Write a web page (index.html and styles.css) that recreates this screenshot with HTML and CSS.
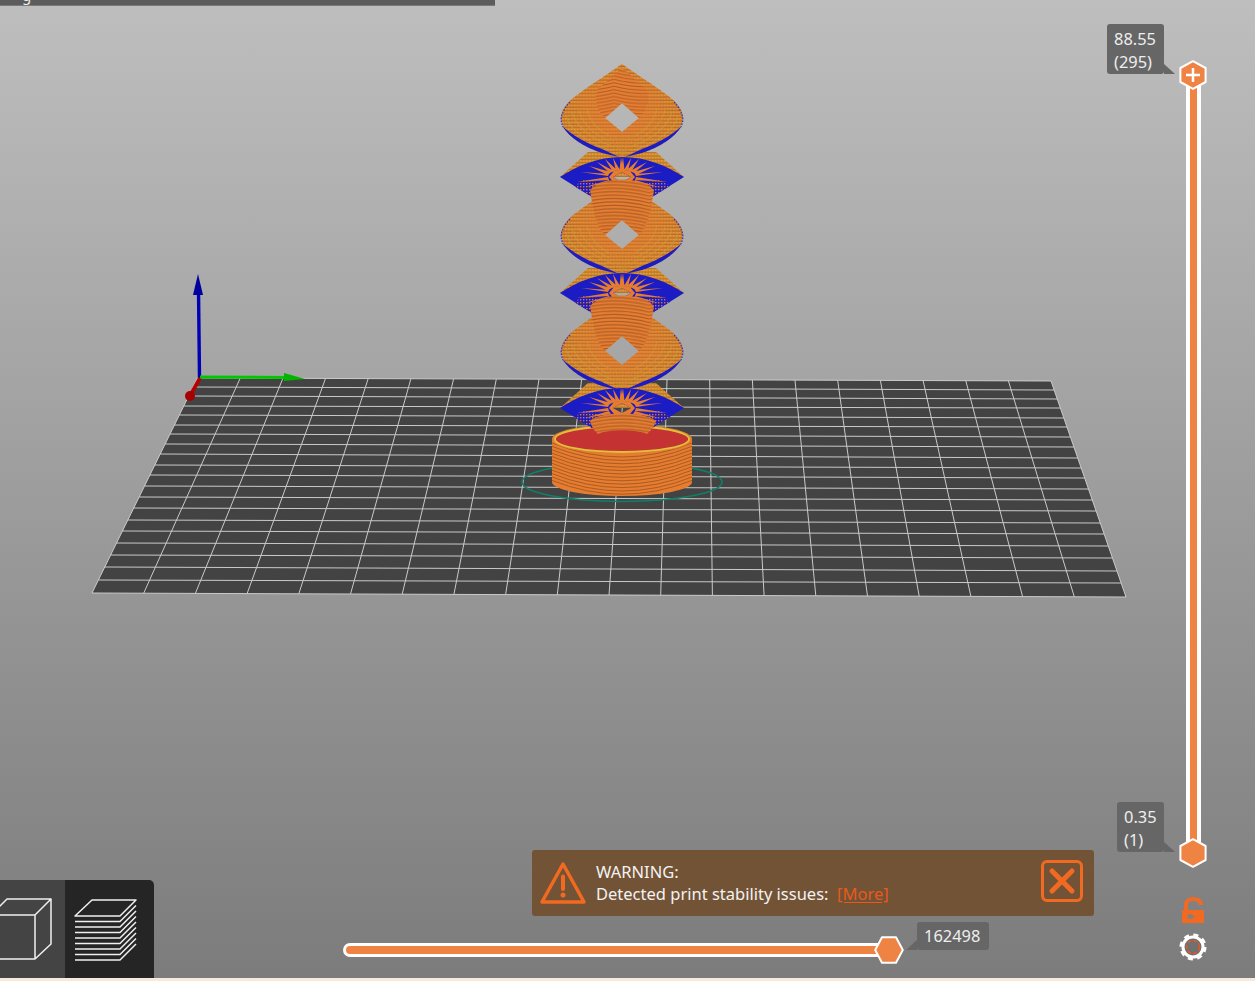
FILE: index.html
```html
<!DOCTYPE html>
<html lang="en">
<head>
<meta charset="utf-8">
<title>Layer preview</title>
<link rel="stylesheet" href="styles.css">
</head>
<body>
<main class="viewport">
  <svg class="scene" viewBox="0 0 1255 978" width="1255" height="978" aria-hidden="true">
    <defs>
      <radialGradient id="grad-lobe" cx="50%" cy="50%" r="50%">
        <stop offset="0" stop-color="#e67f33" stop-opacity=".95"/>
        <stop offset=".5" stop-color="#e67f33" stop-opacity=".7"/>
        <stop offset="1" stop-color="#e67f33" stop-opacity=".1"/>
      </radialGradient>
      <pattern id="pat-stripe" patternUnits="userSpaceOnUse" width="4" height="3.4">
        <rect y="2.3" width="4" height="1" fill="#a85f26" opacity=".55"/>
      </pattern>
      <pattern id="pat-yellow" patternUnits="userSpaceOnUse" width="3" height="3.4">
        <rect width="3" height="3.4" fill="#de8030"/>
        <rect y="0.4" width="1.6" height="1" fill="#d4bb3c"/>
        <rect y="2.4" width="3" height="1" fill="#a9792a"/>
      </pattern>
      <pattern id="pat-smile" patternUnits="userSpaceOnUse" width="60" height="27.2" x="592" y="70">
        <rect width="60" height="27.2" fill="#e67e33"/>
        <path class="col-lines" d="M0 -10Q30 -2 60 -10M0 -6.6Q30 1.4 60 -6.6M0 -3.2Q30 4.8 60 -3.2M0 .2Q30 8.2 60 .2M0 3.6Q30 11.6 60 3.6M0 7Q30 15 60 7M0 10.4Q30 18.4 60 10.4M0 13.8Q30 21.8 60 13.8M0 17.2Q30 25.2 60 17.2M0 20.6Q30 28.6 60 20.6M0 24Q30 32 60 24"/>
      </pattern>
      <pattern id="pat-frown" patternUnits="userSpaceOnUse" width="70" height="27.2" x="587" y="70">
        <rect width="70" height="27.2" fill="#e67e33"/>
        <path class="col-lines" d="M0 0Q35 -9 70 0M0 3.4Q35 -5.6 70 3.4M0 6.8Q35 -2.2 70 6.8M0 10.2Q35 1.2 70 10.2M0 13.6Q35 4.6 70 13.6M0 17Q35 8 70 17M0 20.4Q35 11.4 70 20.4M0 23.8Q35 14.8 70 23.8M0 27.2Q35 18.2 70 27.2M0 30.6Q35 21.6 70 30.6M0 34Q35 25 70 34"/>
      </pattern>
      <pattern id="pat-dots" patternUnits="userSpaceOnUse" width="3" height="3">
        <rect width="3" height="3" fill="#1c1cc4"/>
        <rect width="1.4" height="1.4" fill="#d9752f"/>
      </pattern>

      <path id="lobe-shape" fill-rule="evenodd" d="M0 -54C-14 -44 -30 -34 -42 -25C-54 -17 -61 -9 -61 0C-61 12 -45 27 -20 35L0 39L20 35C45 27 61 12 61 0C61 -9 54 -17 42 -25C30 -34 14 -44 0 -54ZM0 -15L-17 0L0 14L17 0Z"/>

      <g id="lobe">
        <use href="#lobe-shape" class="lobe-out"/>
        <use href="#lobe-shape" class="lobe-in"/>
        <use href="#lobe-shape" class="lobe-stripes"/>
        <path class="lobe-arcs" d="M-56 -2C-52 14 -30 27 -8 33M56 -2C52 14 30 27 8 33M-50 -6C-46 10 -28 22 -10 28M50 -6C46 10 28 22 10 28M-43 -8C-40 6 -26 18 -12 23M43 -8C40 6 26 18 12 23M-35 -10C-33 2 -24 12 -14 17M35 -10C33 2 24 12 14 17"/>
        <path class="lobe-fan" d="M0 37L-14 16M0 37L-7 18M0 37L0 16M0 37L7 18M0 37L14 16M0 37L-20 20M0 37L20 20"/>
        <path class="lobe-blue" d="M-60 8C-52 20 -38 29 -20 35L-3 39L-20 31C-36 25 -50 17 -60 8ZM60 8C52 20 38 29 20 35L3 39L20 31C36 25 50 17 60 8Z"/>
        <path class="lobe-edge" d="M-52 -16C-60 -8 -61 0 -61 2C-60 6 -60 7 -59 9M52 -16C60 -8 61 0 61 2C60 6 60 7 59 9"/>
      </g>

      <path id="roof" class="roof" d="M-62 0L-34 -25L34 -25L62 0Z"/>

      <g id="fan">
        <path class="spikes" d="M-2.500 -7L-1 -20L1 -7ZM-6 -6L-9 -19L-2 -7ZM-9 -5L-17 -18L-5 -7ZM-12 -4L-25 -15L-8 -6ZM-14 -2L-33 -11L-11 -5ZM-14 -1L-41 -5L-13 -3ZM-14 0L-45 5L-13 3ZM-13 3L-37 10L-11 6Z"/>
      </g>

      <g id="blue">
        <path class="blue-band" fill-rule="evenodd" d="M-62 0C-45 -11 -25 -20 0 -20C25 -20 45 -11 62 0L30 20L-30 20ZM0 -5L-9 0L0 5L9 0Z"/>
        <path class="blue-dots" d="M-48 9L-30 20L-24 5L-38 3ZM48 9L30 20L24 5L38 3Z"/>
        <use href="#fan"/>
        <use href="#fan" transform="scale(-1 1)"/>
        <path class="spikes" fill-rule="evenodd" d="M-13 0L-8 -6L0 -7.500L8 -6L13 0L8 6L0 8L-8 6ZM0 -5L-9 0L0 5L9 0Z"/>
      </g>

      <path id="column-top" class="column-smile" d="M-17 0C-25 -8 -28 -18 -25 -28L0 -50L25 -28C28 -18 25 -8 17 0L0 -15Z"/>
      <path id="column" class="column-frown" d="M-17 0C-25 -8 -28 -20 -32 -45C-20 -59 20 -59 32 -45C28 -20 25 -8 17 0L0 -15Z"/>
    </defs>

    <path class="plate" d="M197.5 378L1051 381L1126 597L92 593Z"/>
    <path class="plate-lines" d="M197.5 378L92 593M240.2 378.2L143.7 593.2M282.9 378.3L195.4 593.4M325.5 378.5L247.1 593.6M368.2 378.6L298.8 593.8M410.9 378.8L350.5 594M453.6 378.9L402.2 594.2M496.3 379.1L453.9 594.4M539 379.2L505.6 594.6M581.6 379.4L557.3 594.8M624.3 379.5L609 595M667 379.7L660.7 595.2M709.7 379.8L712.4 595.4M752.4 380L764.1 595.6M795 380.1L815.8 595.8M837.7 380.3L867.5 596M880.4 380.4L919.2 596.2M923.1 380.6L970.9 596.4M965.8 380.7L1022.6 596.6M1008.4 380.9L1074.3 596.8M1051 381L1126 597"/>
    <path class="plate-lines" d="M197.5 378L1051 381M193.1 387L1054.1 390M188.7 396L1057.2 399M183.8 406L1060.4 408M179.3 415L1063.8 418M174.4 425L1067 427M170 434L1070.4 437M165.1 444L1073.9 447M160.2 454L1077.7 458M154.8 465L1081.2 468M149.9 475L1084.7 478M144.5 486L1088.5 489M139.1 497L1092.3 500M133.7 508L1096.1 511M127.8 520L1100.3 523M122.4 531L1104.1 534M116.5 543L1108.3 546M110.6 555L1112.4 558M104.8 567L1116.9 571M98.4 580L1121.1 583M92 593L1126 597"/>

    <g class="axes">
      <path class="axis-z" d="M199.5 378L198.5 290"/>
      <path class="axis-z-head" d="M198 274L193 295L203 295Z"/>
      <path class="axis-y" d="M200 377L286 377.5"/>
      <path class="axis-y-head" d="M284 373L305 379L284 381Z"/>
      <path class="axis-x" d="M200 378L191 394"/>
      <circle class="axis-x-head" cx="190" cy="396" r="5"/>
    </g>

    <ellipse class="bed-ring" cx="622" cy="482" rx="100" ry="19.5"/>

    <g class="base">
      <path class="base-body" d="M552 438V482A70 14 0 0 0 692 482V438Z"/>
      <path class="base-lines" d="M552 443Q622 471 692 443M552 446.4Q622 474.4 692 446.4M552 449.8Q622 477.8 692 449.8M552 453.2Q622 481.2 692 453.2M552 456.6Q622 484.6 692 456.6M552 460Q622 488 692 460M552 463.4Q622 491.4 692 463.4M552 466.8Q622 494.8 692 466.8M552 470.2Q622 498.2 692 470.2M552 473.6Q622 501.6 692 473.6M552 477Q622 505 692 477M552 480.4Q622 508 692 480.4"/>
      <ellipse class="base-top" cx="622" cy="439" rx="70" ry="15"/>
      <ellipse class="base-rim" cx="622" cy="439" rx="67" ry="13"/>
    </g>

    <use href="#roof" x="622" y="177"/>
    <use href="#roof" x="622" y="293"/>
    <use href="#roof" x="622" y="408"/>
    <use href="#lobe" x="622" y="118"/>
    <use href="#lobe" x="622" y="235"/>
    <use href="#lobe" x="622" y="351"/>
    <use href="#blue" x="622" y="177"/>
    <use href="#blue" x="622" y="293"/>
    <use href="#blue" x="622" y="408"/>
    <use href="#column-top" x="622" y="118"/>
    <use href="#column" x="622" y="235"/>
    <use href="#column" x="622" y="351"/>
    <path class="column-frown" d="M590 421C598 411 646 411 656 421C654 428 650 431 647 434C636 429 608 429 598 434C595 431 592 428 590 421Z"/>
  </svg>

  <header class="topbar"><span class="topbar-text">g</span></header>

  <div class="layer-slider">
    <div class="layer-track"></div>
    <svg class="hex hex-top" viewBox="0 0 28 30" width="28" height="30" aria-hidden="true">
      <path class="hex-shape" d="M14 1.2L26.6 8V22L14 28.8L1.4 22V8Z"/>
      <path class="hex-plus" d="M14 8V22M7 15H21"/>
    </svg>
    <svg class="hex hex-bottom" viewBox="0 0 28 30" width="28" height="30" aria-hidden="true">
      <path class="hex-shape" d="M14 1.2L26.6 8V22L14 28.8L1.4 22V8Z"/>
    </svg>
    <div class="tip tip-top">88.55<br>(295)</div>
    <div class="tip tip-bottom">0.35<br>(1)</div>
  </div>

  <div class="side-icons">
    <svg class="lock" viewBox="0 0 24 27" width="24" height="27" aria-hidden="true">
      <path class="lock-shackle" d="M5 14V8C5 4 8 2 12 2C16 2 20 3.500 20 8"/>
      <path class="lock-body" fill-rule="evenodd" d="M1 13H23V26H1ZM9 17A2.500 2.500 0 0 0 9 22C10.500 22 12 20.500 14 19.500C12 18.500 10.500 17 9 17Z"/>
    </svg>
    <svg class="gear" viewBox="0 0 28 28" width="28" height="28" aria-hidden="true">
      <circle class="gear-teeth" cx="14" cy="14" r="12"/>
      <circle class="gear-ring" cx="14" cy="14" r="10"/>
      <circle class="gear-dash" cx="14" cy="14" r="6.500"/>
    </svg>
  </div>

  <section class="warning">
    <svg class="warning-icon" viewBox="0 0 48 44" width="48" height="44" aria-hidden="true">
      <path class="warning-tri" d="M24 3L3 41H45Z"/>
      <path class="warning-bar" d="M24 15.500V28"/>
      <circle class="warning-dot" cx="24" cy="34" r="2.500"/>
    </svg>
    <p class="warning-text">WARNING:<br>Detected print stability issues:&nbsp; <a class="warning-link">[More]</a></p>
    <button class="warning-close" type="button" aria-label="Close">
      <svg viewBox="0 0 36 36" width="36" height="36" aria-hidden="true"><path d="M8 8L28 28M28 8L8 28"/></svg>
    </button>
  </section>

  <div class="move-slider">
    <div class="move-track"></div>
    <svg class="hex hex-move" viewBox="0 0 30 28" width="30" height="28" aria-hidden="true">
      <path class="hex-shape" d="M8 1.200H22L28.800 14L22 26.800H8L1.200 14Z"/>
    </svg>
    <div class="tip tip-move">162498</div>
  </div>

  <nav class="view-switch">
    <button class="view-btn view-btn-3d" type="button" aria-label="3D view">
      <svg viewBox="0 0 65 97" width="65" height="97" aria-hidden="true">
        <path d="M-9 34H35V78H-9ZM-9 34L7 18H51L35 34M51 18V63L35 78"/>
      </svg>
    </button>
    <button class="view-btn view-btn-layers" type="button" aria-label="Layers view">
      <svg viewBox="0 0 89 97" width="89" height="97" aria-hidden="true">
        <path d="M10 35L27 19H71L55 35Z"/>
        <path d="M10 40.500H55L71 24.500M10 46H55L71 30M10 51.500H55L71 35.500M10 57H55L71 41M10 62.500H55L71 46.500M10 68H55L71 52M10 73.500H55L71 57.500M10 79H55L71 63"/>
      </svg>
    </button>
  </nav>
</main>
<div class="statusline"></div>
</body>
</html>
```
FILE: styles.css
```css
* { box-sizing: border-box; }
html, body { margin: 0; padding: 0; }
body { width: 1255px; height: 981px; overflow: hidden; font-family: "Noto Sans", "Open Sans", sans-serif; font-size: 16px; color: #eee; background: #f7e9dc; }

.viewport { position: relative; width: 1255px; height: 978px; overflow: hidden; background: linear-gradient(180deg, #bebebe 0%, #7c7c7c 100%); }
.statusline { height: 3px; background: #f7e9dc; }
.scene { position: absolute; left: 0; top: 0; display: block; }

/* plate */
.plate { fill: #434343; }
.plate-lines { fill: none; stroke: #cacaca; stroke-width: 1; }

/* axes */
.axis-z { fill: none; stroke: #0000b4; stroke-width: 3.4; }
.axis-z-head { fill: #00009e; }
.axis-y { fill: none; stroke: #00c800; stroke-width: 3; }
.axis-y-head { fill: #00b400; }
.axis-x { fill: none; stroke: #b80000; stroke-width: 3.6; }
.axis-x-head { fill: #a80000; }

/* print object */
.bed-ring { fill: none; stroke: #0f7f68; stroke-width: 1.6; }
.base-body { fill: #e57c30; }
.base-lines { fill: none; stroke: #ab5b22; stroke-width: 1; }
.base-top { fill: #e57c30; }
.base-rim { fill: #c53232; stroke: #dcc23a; stroke-width: 1.800; }

.lobe-out { fill: url(#pat-yellow); }
.lobe-in { fill: url(#grad-lobe); }
.lobe-stripes { fill: url(#pat-stripe); }
.lobe-arcs { fill: none; stroke: #c9a038; stroke-width: 1.1; opacity: .55; }
.lobe-fan { fill: none; stroke: #c9912f; stroke-width: 1; opacity: .6; }
.lobe-blue { fill: #1c1cc4; }
.lobe-edge { fill: none; stroke: #3030d0; stroke-width: 1.2; stroke-dasharray: 1.500 1.500; }
.roof { fill: url(#pat-yellow); }
.blue-band { fill: #1c1cc4; }
.blue-dots { fill: url(#pat-dots); }
.spikes { fill: #e57c30; }
.column-smile { fill: url(#pat-smile); }
.column-frown { fill: url(#pat-frown); }
.col-lines { fill: none; stroke: #ab5b24; stroke-width: 1; }

/* top bar */
.topbar { position: absolute; left: 0; top: 0; width: 495px; height: 6px; padding-left: 22px; display: flex; align-items: flex-end; overflow: hidden; background: #5c5c5c; border-bottom: 1px solid #7a7a7a; }
.topbar-text { display: block; height: 20px; line-height: 20px; font-size: 15px; color: #eee; flex: none; }

/* sliders */
.hex { position: absolute; display: block; }
.hex-shape { fill: #ef8343; stroke: #fff; stroke-width: 2; stroke-linejoin: round; }
.hex-plus { fill: none; stroke: #fff; stroke-width: 2.500; }

.layer-slider { position: absolute; left: 1100px; top: 20px; width: 120px; height: 860px; }
.layer-track { position: absolute; left: 85.500px; top: 50px; width: 15px; height: 785px; border: 4px solid #fff; background: #ef8343; }
.hex-top { left: 79px; top: 40px; }
.hex-bottom { left: 79px; top: 818px; }

.tip { position: absolute; background: #666; border-radius: 3px; color: #eee; font-size: 16.400px; line-height: 22.500px; padding: 4px 7px; white-space: nowrap; }
.tip::after { content: ""; position: absolute; width: 0; height: 0; }
.tip-top { left: 7px; top: 4px; width: 57px; height: 50px; }
.tip-bottom { left: 17px; top: 782px; width: 47px; height: 50px; }
.tip-top::after, .tip-bottom::after { left: 100%; bottom: 0; border-style: solid; border-width: 10px 0 0 11px; border-color: transparent transparent transparent #666; }

.side-icons { position: absolute; left: 1179px; top: 897px; width: 28px; display: flex; flex-direction: column; align-items: center; gap: 9px; }
.lock { display: block; }
.lock-shackle { fill: none; stroke: #f26a22; stroke-width: 4; }
.lock-body { fill: #f26a22; }
.gear { display: block; }
.gear-teeth { fill: none; stroke: #fff; stroke-width: 3; stroke-dasharray: 5 4.425; }
.gear-ring { fill: #707070; stroke: #fff; stroke-width: 3; }
.gear-dash { fill: none; stroke: #e8591c; stroke-width: 1.500; stroke-dasharray: 4 2; }

/* warning */
.warning { position: absolute; left: 532px; top: 850px; width: 562px; height: 66px; display: flex; align-items: center; padding: 0 11px 0 7px; background: #735335; border-radius: 3px; }
.warning-icon { flex: none; display: block; }
.warning-tri { fill: none; stroke: #f26a22; stroke-width: 3.500; stroke-linejoin: round; }
.warning-bar { fill: none; stroke: #f26a22; stroke-width: 4; stroke-linecap: round; }
.warning-dot { fill: #f26a22; }
.warning-text { flex: 1; margin: 0 0 0 9px; font-size: 16.500px; line-height: 22.500px; color: #f2f2f2; white-space: nowrap; }
.warning-link { color: #e8591c; text-decoration: underline; text-underline-offset: 2px; }
.warning-close { flex: none; width: 42px; height: 42px; margin-bottom: 4px; padding: 0; display: flex; align-items: center; justify-content: center; background: transparent; border: 3px solid #f26a22; border-radius: 6px; }
.warning-close svg { display: block; }
.warning-close path { fill: none; stroke: #f26a22; stroke-width: 5; stroke-linecap: round; }

.move-slider { position: absolute; left: 340px; top: 920px; width: 660px; height: 46px; }
.move-track { position: absolute; left: 3px; top: 23px; width: 540px; height: 14px; border: 3.500px solid #fff; border-radius: 7px 0 0 7px; background: #ef8343; }
.hex-move { left: 534px; top: 16px; }
.tip-move { left: 577px; top: 2px; width: 72px; height: 28px; line-height: 28px; padding: 0 7px; }
.tip-move::after { right: 100%; bottom: 0; border-style: solid; border-width: 0 0 10px 11px; border-color: transparent transparent #666 transparent; }

/* view switch */
.view-switch { position: absolute; left: 0; top: 880px; width: 154px; height: 98px; display: flex; border-top-right-radius: 5px; overflow: hidden; }
.view-btn { padding: 0; border: 0; display: block; }
.view-btn svg { display: block; overflow: hidden; }
.view-btn path { fill: none; stroke: #f0f0f0; stroke-width: 1.500; stroke-linejoin: round; }
.view-btn-3d { width: 65px; background: #444; }
.view-btn-layers { width: 89px; background: #252525; }
```
